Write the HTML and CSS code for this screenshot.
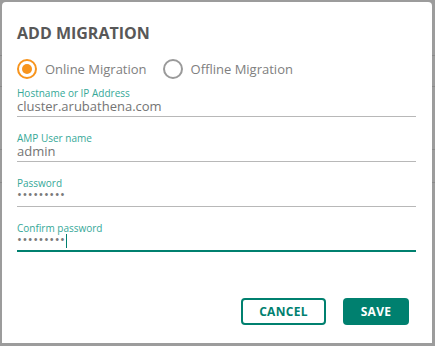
FILE: index.html
```html
<!DOCTYPE html>
<html lang="en">
<head>
    <meta charset="UTF-8">
    <meta name="viewport" content="width=device-width, initial-scale=1.0">
    <title>Add Migration</title>
    <link rel="stylesheet" href="styles.css">
</head>
<body>
    <div class="backdrop">
        <div class="dialog">
            <h2 class="dialog-title">ADD MIGRATION</h2>
            <div class="radio-group">
                <label class="radio checked">
                    <span class="radio-circle"></span>
                    Online Migration
                </label>
                <label class="radio">
                    <span class="radio-circle"></span>
                    Offline Migration
                </label>
            </div>
            <div class="field">
                <div class="field-label">Hostname or IP Address</div>
                <div class="field-value">cluster.arubathena.com</div>
            </div>
            <div class="field">
                <div class="field-label">AMP User name</div>
                <div class="field-value">admin</div>
            </div>
            <div class="field">
                <div class="field-label">Password</div>
                <div class="field-value dots">•••••••••</div>
            </div>
            <div class="field focused">
                <div class="field-label">Confirm password</div>
                <div class="field-value dots">•••••••••<span class="caret"></span></div>
            </div>
            <div class="dialog-actions">
                <button class="btn btn-outline">CANCEL</button>
                <button class="btn btn-primary">SAVE</button>
            </div>
        </div>
    </div>
</body>
</html>
```
FILE: styles.css
```css
body {
    margin: 0;
    padding: 0;
    font-family: 'Open Sans', 'Noto Sans', sans-serif;
    background-color: #9c9c9c;
}
.backdrop {
    width: 435px;
    height: 346px;
    padding: 2px 3px 0 2px;
    box-sizing: border-box;
    background:
        linear-gradient(#8a8a8a, #8a8a8a) 0 55px / 100% 1px no-repeat,
        linear-gradient(#8a8a8a, #8a8a8a) 0 86px / 100% 1px no-repeat,
        linear-gradient(#8a8a8a, #8a8a8a) 0 149px / 100% 1px no-repeat,
        linear-gradient(#8a8a8a, #8a8a8a) 0 182px / 100% 1px no-repeat,
        #9c9c9c;
}
.dialog {
    background: white;
    height: 341px;
    border-radius: 4px 4px 0 0;
    padding: 19px 16px 0 15px;
    box-sizing: border-box;
    display: flex;
    flex-direction: column;
}
.dialog-title {
    margin: 0;
    font-size: 16px;
    line-height: 24px;
    font-weight: 700;
    color: #585858;
}
.radio-group {
    display: flex;
    gap: 16px;
    margin-top: 14px;
}
.radio {
    display: flex;
    align-items: center;
    gap: 8px;
    font-size: 13px;
    line-height: 20px;
    color: #808080;
}
.radio-circle {
    width: 20px;
    height: 20px;
    border: 2px solid #9a9a9a;
    border-radius: 50%;
    box-sizing: border-box;
    position: relative;
}
.radio.checked .radio-circle {
    border-color: #f7941d;
}
.radio.checked .radio-circle::after {
    content: '';
    position: absolute;
    left: 3px;
    top: 3px;
    width: 10px;
    height: 10px;
    border-radius: 50%;
    background: #f7941d;
}
.field {
    border-bottom: 1px solid #b8b8b8;
    margin-top: 9px;
    padding-bottom: 1px;
}
.field + .field {
    margin-top: 16px;
}
.field-label {
    font-size: 10px;
    line-height: 10px;
    color: #35a898;
}
.field-value {
    font-size: 13px;
    line-height: 17px;
    height: 17px;
    color: #747474;
}
.dots {
    line-height: 13px;
    letter-spacing: 0.5px;
    color: #7a7a7a;
}
.caret {
    display: inline-block;
    width: 1px;
    height: 14px;
    background: #00806f;
    vertical-align: -4px;
}
.field.focused {
    border-bottom: 2px solid #00806f;
    padding-bottom: 0;
}
.dialog-actions {
    display: flex;
    justify-content: flex-end;
    gap: 17px;
    margin-top: auto;
    margin-bottom: 18px;
    padding-right: 7px;
}
.btn {
    height: 27px;
    border-radius: 4px;
    font-family: 'Open Sans', 'Noto Sans', sans-serif;
    font-size: 12px;
    font-weight: 700;
    letter-spacing: 0.3px;
    cursor: pointer;
}
.btn-outline {
    width: 85px;
    background: white;
    border: 2px solid #00806f;
    color: #00806f;
}
.btn-primary {
    width: 66px;
    background: #00806f;
    border: none;
    color: white;
}
```
